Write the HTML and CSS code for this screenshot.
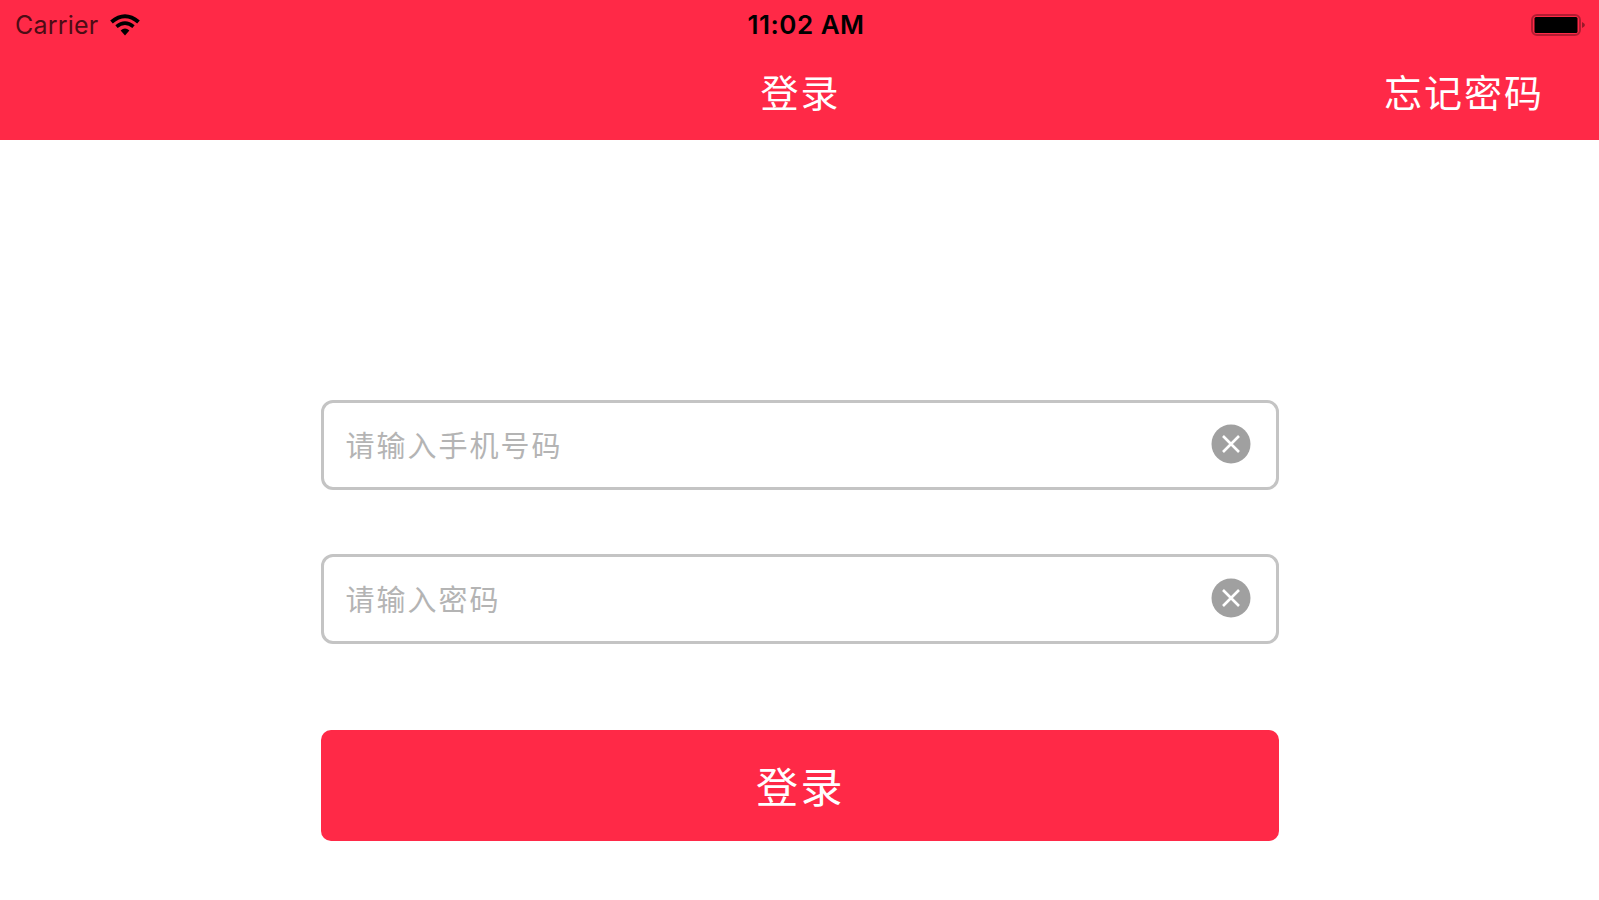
FILE: index.html
```html
<!DOCTYPE html>
<html lang="zh-CN">

<head>
    <meta charset="UTF-8">
    <meta name="viewport" content="width=device-width, initial-scale=1.0">
    <title>登录</title>
    <link rel="stylesheet" href="styles.css">
</head>

<body>
    <header class="header">
        <div class="status-bar">
            <div class="carrier">
                <span>Carrier</span>
                <svg class="wifi" viewBox="0 0 30 22">
                    <path d="M1.5 8 Q15 -3.5 28.5 8" fill="none" stroke="#000" stroke-width="4" />
                    <path d="M6.5 12.6 Q15 5.5 23.5 12.6" fill="none" stroke="#000" stroke-width="3.6" />
                    <path d="M10.6 16.4 Q15 12.6 19.4 16.4 L15 21.5 Z" />
                </svg>
            </div>
            <div class="time">11:02 AM</div>
            <svg class="battery" viewBox="0 0 56 22">
                <rect x="1" y="1" width="48" height="20" rx="5" fill="none" stroke="#000" stroke-opacity="0.3" stroke-width="2" />
                <rect x="3.5" y="3" width="43" height="16" rx="1.5" />
                <path d="M51 8 Q57 11 51 14 Z" fill-opacity="0.4" />
            </svg>
        </div>
        <nav class="nav-bar">
            <h1>登录</h1>
            <a class="forgot">忘记密码</a>
        </nav>
    </header>

    <form class="login-form">
        <div class="field">
            <input type="text" name="phone" placeholder="请输入手机号码">
            <svg class="clear" viewBox="0 0 40 40">
                <circle cx="20" cy="20" r="19.5" />
                <path d="M12 12 L28 28 M28 12 L12 28" />
            </svg>
        </div>
        <div class="field">
            <input type="password" name="password" placeholder="请输入密码">
            <svg class="clear" viewBox="0 0 40 40">
                <circle cx="20" cy="20" r="19.5" />
                <path d="M12 12 L28 28 M28 12 L12 28" />
            </svg>
        </div>
        <button type="button" class="login">登录</button>
    </form>
</body>

</html>
```
FILE: styles.css
```css
* {
    box-sizing: border-box;
}

body {
    margin: 0;
    height: 900px;
    overflow: hidden;
    background-color: #fff;
    font-family: Inter, "Noto Sans CJK SC", sans-serif;
}

.header {
    height: 140px;
    background-color: #ff2947;
}

.status-bar {
    display: grid;
    grid-template-columns: 1fr auto 1fr;
    align-items: center;
    height: 49px;
    padding: 0 12px 0 15px;
    font-size: 25px;
    color: #000;
}

.carrier {
    display: flex;
    align-items: center;
    gap: 12px;
    color: #4d0c15;
    letter-spacing: 0.2px;
}

.wifi {
    width: 30px;
    height: 22px;
}

.time {
    padding-left: 10px;
    font-size: 26px;
    font-weight: 600;
    letter-spacing: 0.5px;
}

.battery {
    justify-self: end;
    width: 56px;
    height: 22px;
}

.nav-bar {
    display: grid;
    grid-template-columns: 1fr auto 1fr;
    align-items: center;
    height: 83px;
    padding-right: 55px;
    padding-left: 57px;
    color: #fff;
}

h1,
.forgot {
    margin: 0;
    font-size: 38px;
    font-weight: 400;
    letter-spacing: 2px;
}

h1 {
    grid-column: 2;
}

.forgot {
    justify-self: end;
}

.login-form {
    width: 958px;
    margin: 260px auto 0;
}

.field {
    display: flex;
    align-items: center;
    height: 90px;
    margin-bottom: 64px;
    padding: 0 25px 2px 22px;
    border: 3px solid #c4c4c4;
    border-radius: 12px;
}

.field input {
    flex: 1;
    padding: 4px 0 0;
    border: none;
    outline: none;
    background: none;
    font-family: inherit;
    font-size: 29px;
    letter-spacing: 2px;
}

.field input::placeholder {
    color: #b4b4b4;
}

.clear {
    width: 40px;
    height: 40px;
}

.clear circle {
    fill: #a0a0a0;
}

.clear path {
    stroke: #fff;
    stroke-width: 2.6;
}

.login {
    display: block;
    width: 100%;
    height: 111px;
    margin-top: 86px;
    padding: 0 0 2px 2px;
    border: none;
    border-radius: 10px;
    background-color: #ff2947;
    color: #fff;
    font-family: inherit;
    font-size: 42px;
    font-weight: 400;
    letter-spacing: 2.5px;
}
```
